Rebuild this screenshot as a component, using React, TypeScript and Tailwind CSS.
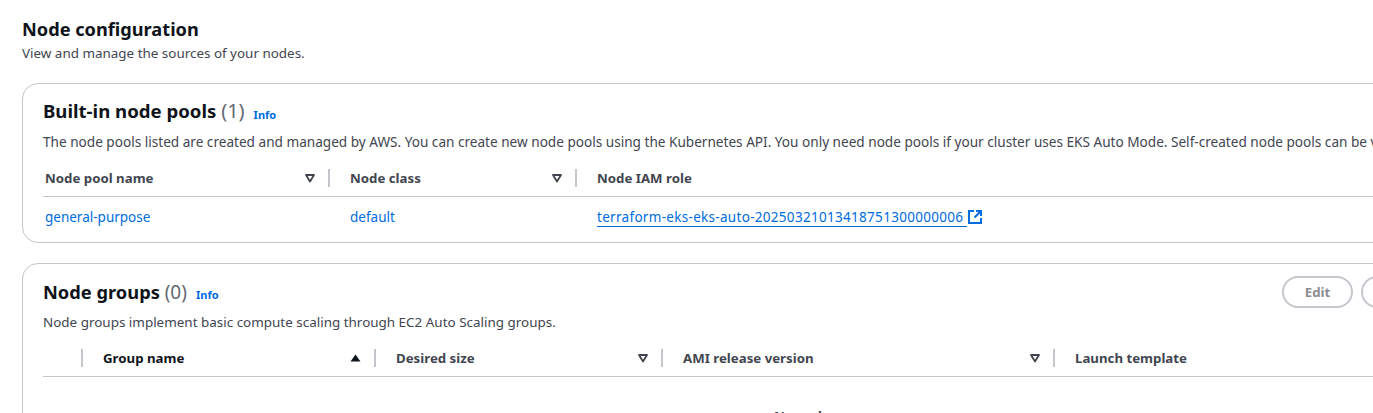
import React from 'react';

const FONT = { fontFamily: '"Noto Sans", sans-serif' };

function SortDown() {
  return (
    <svg width="10" height="10" viewBox="0 0 10 10" className="shrink-0">
      <path d="M1 2h8L5 8.5z" fill="none" stroke="#424650" strokeWidth="1.8" strokeLinejoin="round" />
    </svg>
  );
}

function SortUp() {
  return (
    <svg width="11" height="10" viewBox="0 0 11 10" className="shrink-0">
      <path d="M5.5 1.5L10.5 8.5H.5z" fill="#0f141a" />
    </svg>
  );
}

function ExternalIcon() {
  return (
    <svg width="16" height="16" viewBox="0 0 16 16" fill="none" stroke="#006ce0" strokeWidth="2" className="shrink-0">
      <path d="M7 2H2v12h12V9" />
      <path d="M9 2h5v5M14 2L7.5 8.5" />
    </svg>
  );
}

function Info() {
  return <a className="text-[11px] font-bold text-[#006ce0] leading-none">Info</a>;
}

function HeaderCell({ w, label, sort, dark }: { w: string; label: string; sort?: React.ReactNode; dark?: boolean }) {
  return (
    <div className={`${w} shrink-0 flex items-center h-[18px] pr-[13px] text-[13.25px] font-bold ${dark ? 'text-[#0f141a]' : 'text-[#424650]'}`}>
      <span className="flex-1 whitespace-nowrap pt-[1px]">{label}</span>
      {sort}
    </div>
  );
}

function Sep() {
  return <div className="w-[2px] h-[18px] bg-[#c6c6cd] shrink-0 mr-[20px]" />;
}

export default function App() {
  return (
    <div className="w-[1373px] h-[413px] overflow-hidden bg-white pl-[22px] pt-[16px] text-[#0f141a]" style={FONT}>
      <h2 className="text-[18.2px] font-bold leading-[26px]">Node configuration</h2>
      <p className="text-[13.43px] leading-[18px] text-[#424650] mt-[2px]">View and manage the sources of your nodes.</p>

      {/* Built-in node pools */}
      <section className="w-[1500px] h-[160px] mt-[21px] border border-[#c6c6cd] rounded-2xl pl-[20px] pt-[15px]">
        <div className="flex items-center h-[26px]">
          <h3 className="text-[18.6px] font-bold leading-[26px] whitespace-nowrap pb-[2px]">
            Built-in node pools <span className="text-[20px] font-normal text-[#656871]">(1)</span>
          </h3>
          <span className="ml-[9px] mt-[2px]"><Info /></span>
        </div>
        <p className="text-[13.6px] leading-[18px] text-[#424650] mt-[8px] whitespace-nowrap">
          The node pools listed are created and managed by AWS. You can create new node pools using the Kubernetes API. You only need node pools if your cluster uses EKS Auto Mode. Self-created node pools can be viewed in the Compute tab of your cluster.
        </p>
        <div className="flex items-center h-[37px] mt-[9px] border-b border-[#c6c6cd] pl-[2px]">
          <HeaderCell w="w-[283px]" label="Node pool name" sort={<SortDown />} />
          <Sep />
          <HeaderCell w="w-[225px]" label="Node class" sort={<SortDown />} />
          <Sep />
          <HeaderCell w="w-[400px]" label="Node IAM role" />
        </div>
        <div className="flex items-center h-[40px] pl-[2px] text-[13.5px] text-[#006ce0]">
          <a className="w-[305px] shrink-0">general-purpose</a>
          <a className="w-[247px] shrink-0">default</a>
          <span className="flex items-center">
            <a className="border-b border-[#006ce0] pr-[4px] leading-[18px] mt-[1px] tracking-[0.3px]">terraform-eks-eks-auto-20250321013418751300000006</a>
            <ExternalIcon />
          </span>
        </div>
      </section>

      {/* Node groups */}
      <section className="w-[1500px] h-[200px] mt-[20px] border border-[#c6c6cd] rounded-2xl pl-[20px] pt-[12px]">
        <div className="flex items-center h-[32px] pr-[70px]">
          <h3 className="text-[18.3px] font-bold leading-[26px] whitespace-nowrap pb-[1px]">
            Node groups <span className="text-[19px] font-normal text-[#656871]">(0)</span>
          </h3>
          <span className="ml-[9px] mt-[2px]"><Info /></span>
          <button className="ml-auto w-[71px] h-[32px] shrink-0 rounded-full border-2 border-[#c6c6cd] pt-[1px] text-[13.25px] font-bold text-[#8c8c94]">Edit</button>
          <button className="ml-[8px] w-[90px] h-[32px] shrink-0 rounded-full border-2 border-[#c6c6cd] pt-[1px] text-[13.25px] font-bold text-[#8c8c94]">Delete</button>
        </div>
        <p className="text-[13.45px] leading-[18px] text-[#424650] mt-[5px] whitespace-nowrap">
          Node groups implement basic compute scaling through EC2 Auto Scaling groups.
        </p>
        <div className="flex items-center h-[37px] mt-[9px] border-b border-[#c6c6cd]">
          <div className="w-[38px] shrink-0" />
          <Sep />
          <HeaderCell w="w-[271px]" label="Group name" sort={<SortUp />} dark />
          <Sep />
          <HeaderCell w="w-[265px]" label="Desired size" sort={<SortDown />} />
          <Sep />
          <HeaderCell w="w-[370px]" label="AMI release version" sort={<SortDown />} />
          <Sep />
          <HeaderCell w="w-[300px]" label="Launch template" />
        </div>
        <p className="pl-[731px] mt-[30px] text-[13.25px] font-bold leading-[18px] text-[#424650]">No node groups</p>
      </section>
    </div>
  );
}
